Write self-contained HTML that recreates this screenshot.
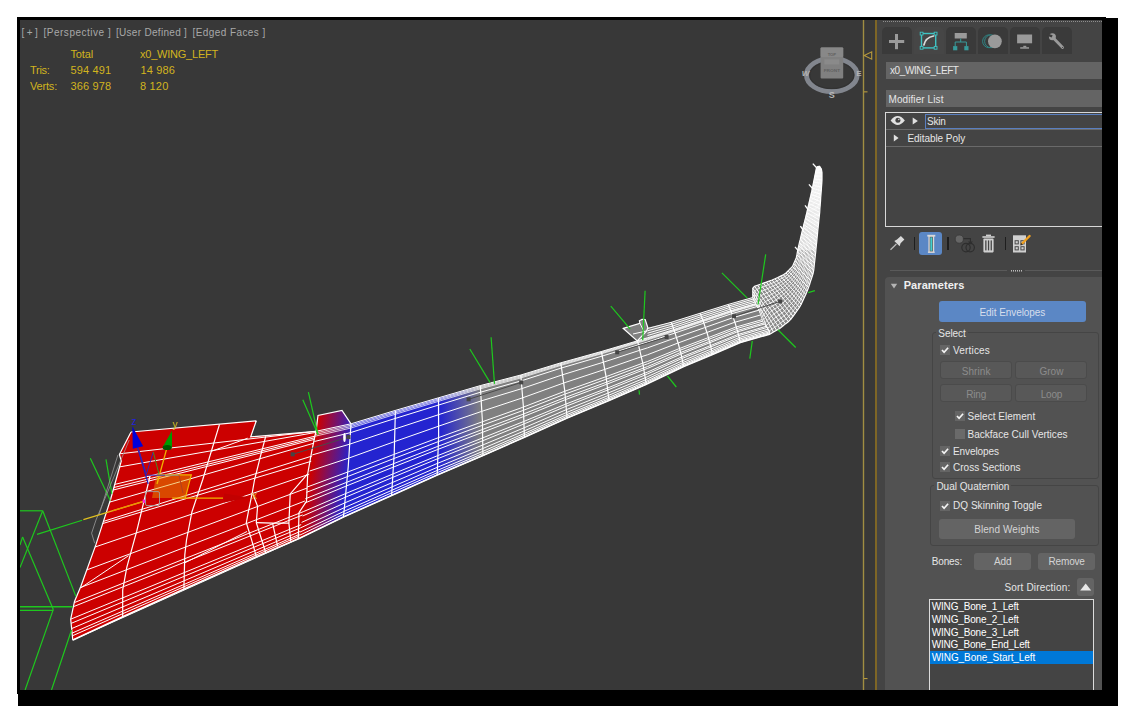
<!DOCTYPE html>
<html><head><meta charset="utf-8"><title>3ds Max - Skin modifier</title>
<style>
html,body{margin:0;padding:0;background:#fff;}
body{width:1122px;height:710px;position:relative;overflow:hidden;font-family:"Liberation Sans",sans-serif;font-size:10px;color:#e6e6e6;}
.abs{position:absolute}
#shadow{left:18px;top:18px;width:1100px;height:688px;background:#000}
#frame{left:17px;top:17px;width:1089px;height:677px;background:#000}
#vp{left:20px;top:20px;width:857px;height:670px;background:#383838;overflow:hidden}
#panel{left:877px;top:20px;width:225px;height:670px;background:#444444;overflow:hidden}
.t{position:absolute;white-space:nowrap;line-height:13px;height:13px}
.y{color:#d2b41e;font-size:11px}
.tab{position:absolute;top:7px;height:27px;background:#3a3a3a;border-radius:5px 5px 0 0}
.fld{position:absolute;left:9px;width:230px;height:17px;background:#646464}
.btn{position:absolute;background:#646464;border-radius:3px;text-align:center;color:#d4d4d4}
.dbtn{position:absolute;background:#585858;border:1px solid #4b4b4b;border-radius:3px;box-sizing:border-box;color:#8c8c8c;text-align:center}
.grp{position:absolute;border:1px solid #454545;border-radius:3px;box-sizing:border-box}
.cb{position:absolute;width:10px;height:10px;background:#656565}
.sep{position:absolute;width:1.6px;background:#1e1e1e;top:217.1px;height:12.6px}
</style></head><body>
<div id="shadow" class="abs"></div>
<div id="frame" class="abs"></div>

<!-- ================= VIEWPORT ================= -->
<div id="vp" class="abs"></div>
<svg class="abs" style="left:0;top:0" width="1122" height="710" viewBox="0 0 1122 710">
<clipPath id="vpc"><rect x="20" y="20" width="857" height="670"/></clipPath>
<g clip-path="url(#vpc)">
<defs>
<linearGradient id="rb" gradientUnits="userSpaceOnUse" x1="311" y1="470" x2="347.5" y2="475"><stop offset="0" stop-color="#cc0000"/><stop offset="1" stop-color="#2424d0"/></linearGradient>
<linearGradient id="bg" gradientUnits="userSpaceOnUse" x1="440" y1="430" x2="481" y2="430"><stop offset="0" stop-color="#2424d0"/><stop offset="1" stop-color="#808080"/></linearGradient>
</defs>
<polygon points="131.0,432.0 256.3,420.8 250.7,436.9 316.0,431.3 299.0,538.5 255.9,557.0 184.8,588.8 122.7,616.7 73.0,640.0 70.7,619.2 74.5,601.4 80.9,586.2 96.0,544.4 110.7,499.0 121.3,461.0 119.4,454.5" fill="#cc0000"/>
<polygon points="316.0,431.3 318.0,415.5 342.0,410.4 351.0,423.8 343.4,517.0 299.0,538.5" fill="url(#rb)"/>
<polygon points="351.0,423.8 395.4,410.4 438.5,397.8 437.2,475.0 391.6,495.4 343.4,517.0" fill="#2424d0"/>
<polygon points="438.5,397.8 480.3,385.6 482.9,455.6 437.2,475.0" fill="url(#bg)"/>
<polygon points="480.3,385.6 520.8,375.0 560.8,362.8 601.4,351.5 637.5,340.8 623.3,328.4 639.9,323.3 639.4,320.8 642.0,319.4 645.2,319.5 647.8,327.6 671.3,322.3 700.2,313.2 728.3,304.4 752.8,297.5 770.3,333.9 740.3,342.6 712.5,354.5 683.7,366.6 646.3,384.3 609.0,400.4 567.1,418.0 524.4,437.2 482.9,455.6" fill="#808080"/>
<line x1="119.7" y1="453.8" x2="316.0" y2="431.3" stroke="#ffffff" stroke-width="1" fill="none"/>
<line x1="119.6" y1="466.9" x2="315.8" y2="432.4" stroke="#ffffff" stroke-width="1" fill="none"/>
<line x1="114.8" y1="484.4" x2="315.2" y2="436.1" stroke="#ffffff" stroke-width="1" fill="none"/>
<line x1="113.9" y1="487.5" x2="315.0" y2="437.7" stroke="#ffffff" stroke-width="1" fill="none"/>
<line x1="113.2" y1="490.0" x2="314.7" y2="439.3" stroke="#ffffff" stroke-width="1" fill="none"/>
<line x1="109.7" y1="502.1" x2="314.1" y2="443.1" stroke="#ffffff" stroke-width="1" fill="none"/>
<line x1="103.4" y1="521.4" x2="312.1" y2="456.0" stroke="#ffffff" stroke-width="1" fill="none"/>
<line x1="102.8" y1="523.5" x2="311.2" y2="461.3" stroke="#ffffff" stroke-width="1" fill="none"/>
<line x1="95.1" y1="547.0" x2="309.2" y2="474.2" stroke="#ffffff" stroke-width="1" fill="none"/>
<line x1="86.8" y1="569.9" x2="307.0" y2="488.1" stroke="#ffffff" stroke-width="1" fill="none"/>
<line x1="80.3" y1="587.6" x2="304.9" y2="501.0" stroke="#ffffff" stroke-width="1" fill="none"/>
<line x1="74.3" y1="602.6" x2="303.2" y2="511.7" stroke="#ffffff" stroke-width="1" fill="none"/>
<line x1="73.4" y1="606.7" x2="302.7" y2="514.9" stroke="#ffffff" stroke-width="1" fill="none"/>
<line x1="70.7" y1="619.2" x2="301.2" y2="524.6" stroke="#ffffff" stroke-width="1" fill="none"/>
<line x1="71.1" y1="623.4" x2="300.7" y2="527.8" stroke="#ffffff" stroke-width="1" fill="none"/>
<line x1="71.6" y1="628.6" x2="300.1" y2="531.5" stroke="#ffffff" stroke-width="1" fill="none"/>
<line x1="72.1" y1="633.1" x2="299.7" y2="534.2" stroke="#ffffff" stroke-width="1" fill="none"/>
<line x1="72.4" y1="635.8" x2="299.4" y2="536.0" stroke="#ffffff" stroke-width="1" fill="none"/>
<line x1="72.8" y1="640.0" x2="299.0" y2="538.5" stroke="#ffffff" stroke-width="1" fill="none"/>
<line x1="131.0" y1="432.0" x2="256.3" y2="420.8" stroke="#ffffff" stroke-width="1.2" fill="none"/>
<line x1="211.4" y1="451.3" x2="247.7" y2="438.2" stroke="#ffffff" stroke-width="1" fill="none"/>
<polyline points="256.3,420.8 250.7,436.9 316.0,431.3" stroke="#ffffff" stroke-width="1.2" fill="none"/>
<polyline points="131.0,432.0 119.4,454.5 121.3,461.0 110.7,499.0 96.0,544.4 80.9,586.2 74.5,601.4 70.7,619.2 72.8,640.2" stroke="#ffffff" stroke-width="1.2" fill="none"/>
<polyline points="150.0,476.0 149.1,480.0 136.6,531.7 126.8,567.3 122.7,590.0 122.7,616.7" stroke="#ffffff" stroke-width="1.2" fill="none"/>
<polyline points="219.5,424.4 202.6,480.0 191.9,512.0 186.5,540.0 184.8,554.9 183.9,588.7" stroke="#ffffff" stroke-width="1.2" fill="none"/>
<polyline points="265.7,436.3 260.1,457.6 254.5,480.0 252.3,492.5 248.2,512.6 246.3,522.6 251.3,538.9 256.3,556.4" stroke="#ffffff" stroke-width="1.2" fill="none"/>
<polyline points="252.3,492.5 257.6,506.3 256.3,522.6 262.6,542.7 265.7,552.7" stroke="#ffffff" stroke-width="1.2" fill="none"/>
<polyline points="256.3,522.6 272.6,523.2 288.9,523.2" stroke="#ffffff" stroke-width="1.2" fill="none"/>
<polyline points="272.6,523.2 277.6,546.4" stroke="#ffffff" stroke-width="1.2" fill="none"/>
<polyline points="307.7,473.9 290.2,493.9 288.9,523.2 290.8,541.5" stroke="#ffffff" stroke-width="1.2" fill="none"/>
<polyline points="315.9,431.3 311.5,452.6 307.7,473.9 306.5,501.3 299.0,512.6 298.3,538.4" stroke="#ffffff" stroke-width="1.2" fill="none"/>
<line x1="81" y1="587.7" x2="128.5" y2="555.7" stroke="#ffffff" stroke-width="1" fill="none"/>
<line x1="184.5" y1="563" x2="247" y2="531.5" stroke="#ffffff" stroke-width="1" fill="none"/>
<polyline points="316.0,431.3 351.0,423.8 395.4,410.4 438.5,397.8 480.3,385.6 520.8,375.0 560.8,362.8 601.4,351.5 637.5,340.8" stroke="#fff" stroke-width="1" fill="none"/>
<polyline points="315.7,432.9 350.9,425.2 395.3,411.7 438.5,399.0 480.3,386.7 520.9,375.9 560.9,363.6 601.5,352.2 637.6,341.5" stroke="#fff" stroke-width="0.75" fill="none"/>
<polyline points="315.5,434.5 350.8,426.6 395.3,412.9 438.5,400.1 480.4,387.7 520.9,376.9 561.0,364.5 601.6,353.0 637.8,342.1" stroke="#fff" stroke-width="0.75" fill="none"/>
<polyline points="315.2,436.2 350.7,428.1 395.2,414.3 438.4,401.4 480.4,388.8 521.0,377.9 561.1,365.3 601.7,353.7 637.9,342.8" stroke="#fff" stroke-width="0.75" fill="none"/>
<polyline points="314.4,441.5 350.3,432.7 395.0,418.5 438.4,405.1 480.5,392.2 521.1,380.9 561.4,368.0 602.1,356.1 638.3,344.9" stroke="#fff" stroke-width="1" fill="none"/>
<polyline points="312.3,454.9 349.3,444.3 394.6,429.1 438.2,414.8 480.9,401.0 521.6,388.7 562.2,374.9 603.1,362.3 639.4,350.4" stroke="#fff" stroke-width="1" fill="none"/>
<polyline points="309.7,471.0 348.2,458.3 394.0,441.8 438.0,426.4 481.3,411.5 522.1,398.0 563.1,383.2 604.2,369.6 640.8,356.9" stroke="#fff" stroke-width="1" fill="none"/>
<polyline points="307.2,487.0 347.0,472.3 393.4,454.6 437.8,437.9 481.7,422.0 522.7,407.3 564.1,391.5 605.4,376.9 642.1,363.4" stroke="#fff" stroke-width="1" fill="none"/>
<polyline points="306.3,492.4 346.7,476.9 393.2,458.8 437.8,441.8 481.8,425.5 522.9,410.5 564.4,394.3 605.7,379.4 642.5,365.6" stroke="#fff" stroke-width="1" fill="none"/>
<polyline points="305.3,498.8 346.2,482.5 393.0,463.9 437.7,446.4 481.9,429.7 523.1,414.2 564.8,397.6 606.2,382.3 643.0,368.2" stroke="#fff" stroke-width="1" fill="none"/>
<polyline points="304.6,503.1 345.9,486.2 392.9,467.3 437.6,449.5 482.0,432.5 523.2,416.7 565.0,399.8 606.5,384.3 643.4,369.9" stroke="#fff" stroke-width="1" fill="none"/>
<polyline points="303.2,511.7 345.3,493.7 392.6,474.1 437.5,455.7 482.2,438.1 523.5,421.6 565.5,404.2 607.1,388.2 644.1,373.4" stroke="#fff" stroke-width="1" fill="none"/>
<polyline points="302.6,516.0 345.0,497.4 392.4,477.5 437.5,458.8 482.4,440.9 523.6,424.1 565.8,406.4 607.4,390.1 644.5,375.2" stroke="#fff" stroke-width="1" fill="none"/>
<polyline points="301.6,522.4 344.5,503.0 392.2,482.6 437.4,463.4 482.5,445.1 523.9,427.9 566.2,409.7 607.9,393.1 645.0,377.8" stroke="#fff" stroke-width="1" fill="none"/>
<polyline points="300.7,527.8 344.2,507.7 392.0,486.9 437.3,467.3 482.6,448.6 524.0,431.0 566.5,412.5 608.2,395.5 645.4,379.9" stroke="#fff" stroke-width="1" fill="none"/>
<polyline points="300.0,532.1 343.9,511.4 391.8,490.3 437.3,470.4 482.7,451.4 524.2,433.5 566.7,414.7 608.5,397.5 645.8,381.7" stroke="#fff" stroke-width="1" fill="none"/>
<polyline points="299.5,535.3 343.6,514.2 391.7,492.8 437.2,472.7 482.8,453.5 524.3,435.3 566.9,416.3 608.8,398.9 646.0,383.0" stroke="#fff" stroke-width="1" fill="none"/>
<polyline points="299.0,538.5 343.4,517.0 391.6,495.4 437.2,475.0 482.9,455.6 524.4,437.2 567.1,418.0 609.0,400.4 646.3,384.3" stroke="#fff" stroke-width="1" fill="none"/>
<polyline points="316.0,431.3 318.0,415.5 342.0,410.4 351.0,423.8" stroke="#ffffff" stroke-width="1.2" fill="none"/>
<path d="M351.0,423.8 Q348.7,470.4 343.4,517.0" stroke="#ffffff" stroke-width="1.2" fill="none"/>
<path d="M395.4,410.4 Q395.0,452.9 391.6,495.4" stroke="#ffffff" stroke-width="1.2" fill="none"/>
<path d="M438.5,397.8 Q439.4,436.4 437.2,475.0" stroke="#ffffff" stroke-width="1.2" fill="none"/>
<path d="M480.3,385.6 Q483.1,420.6 482.9,455.6" stroke="#ffffff" stroke-width="1.2" fill="none"/>
<path d="M520.8,375.0 Q524.1,406.1 524.4,437.2" stroke="#ffffff" stroke-width="1.2" fill="none"/>
<path d="M560.8,362.8 Q565.5,390.4 567.1,418.0" stroke="#ffffff" stroke-width="1.2" fill="none"/>
<path d="M601.4,351.5 Q606.7,375.9 609.0,400.4" stroke="#ffffff" stroke-width="1.2" fill="none"/>
<path d="M637.5,340.8 Q643.4,362.6 646.3,384.3" stroke="#ffffff" stroke-width="1.2" fill="none"/>
<polyline points="73.0,640.0 122.7,616.7 184.8,588.8 255.9,557.0 299.0,538.5 343.4,517.0 391.6,495.4 437.2,475.0 482.9,455.6 524.4,437.2 567.1,418.0 609.0,400.4 646.3,384.3 683.7,366.6 712.5,354.5 740.3,342.6 770.3,333.9" stroke="#ffffff" stroke-width="1.6" fill="none"/>
<polyline points="647.5,328.5 671.3,322.3 700.2,313.2 728.3,304.4 752.8,297.5" stroke="#fff" stroke-width="1" fill="none"/>
<polyline points="647.5,330.8 671.8,324.2 700.7,314.9 728.8,306.0 753.5,299.0" stroke="#fff" stroke-width="1" fill="none"/>
<polyline points="647.5,333.2 672.4,326.1 701.2,316.7 729.3,307.6 754.3,300.6" stroke="#fff" stroke-width="1" fill="none"/>
<polyline points="647.5,335.5 672.9,327.9 701.8,318.4 729.8,309.3 755.0,302.1" stroke="#fff" stroke-width="1" fill="none"/>
<polyline points="637.5,340.8 647.4,337.8 673.4,329.7 702.3,320.1 730.3,310.8 755.7,303.6" stroke="#fff" stroke-width="1" fill="none"/>
<polyline points="637.6,341.5 647.4,338.5 673.5,330.3 702.4,320.7 730.5,311.3 756.0,304.1" stroke="#fff" stroke-width="0.75" fill="none"/>
<polyline points="637.8,342.1 647.4,339.2 673.7,330.8 702.6,321.2 730.6,311.8 756.2,304.5" stroke="#fff" stroke-width="0.75" fill="none"/>
<polyline points="637.9,342.8 647.4,339.9 673.9,331.4 702.7,321.7 730.8,312.3 756.4,305.0" stroke="#fff" stroke-width="0.75" fill="none"/>
<polyline points="638.3,344.9 647.4,342.2 674.4,333.2 703.2,323.4 731.3,313.8 757.1,306.5" stroke="#fff" stroke-width="1" fill="none"/>
<polyline points="639.4,350.4 647.4,347.9 675.6,337.8 704.5,327.7 732.5,317.8 758.9,310.2" stroke="#fff" stroke-width="1" fill="none"/>
<polyline points="640.8,356.9 647.4,354.8 677.2,343.3 706.0,332.8 734.0,322.5 761.1,314.8" stroke="#fff" stroke-width="1" fill="none"/>
<polyline points="642.1,363.4 647.3,361.6 678.7,348.8 707.6,337.9 735.5,327.2 763.3,319.3" stroke="#fff" stroke-width="1" fill="none"/>
<polyline points="642.5,365.6 647.3,363.9 679.2,350.6 708.1,339.6 736.0,328.8 764.0,320.8" stroke="#fff" stroke-width="1" fill="none"/>
<polyline points="643.0,368.2 647.3,366.7 679.8,352.8 708.7,341.7 736.6,330.7 764.9,322.6" stroke="#fff" stroke-width="1" fill="none"/>
<polyline points="643.4,369.9 647.3,368.5 680.3,354.3 709.1,343.0 737.0,332.0 765.4,323.8" stroke="#fff" stroke-width="1" fill="none"/>
<polyline points="644.1,373.4 647.3,372.2 681.1,357.2 709.9,345.8 737.8,334.5 766.6,326.2" stroke="#fff" stroke-width="1" fill="none"/>
<polyline points="644.5,375.2 647.3,374.0 681.5,358.7 710.3,347.1 738.2,335.8 767.2,327.4" stroke="#fff" stroke-width="1" fill="none"/>
<polyline points="645.0,377.8 647.2,376.8 682.1,360.9 710.9,349.2 738.8,337.7 768.0,329.2" stroke="#fff" stroke-width="1" fill="none"/>
<polyline points="645.4,379.9 647.2,379.0 682.6,362.7 711.4,350.9 739.2,339.2 768.8,330.7" stroke="#fff" stroke-width="1" fill="none"/>
<polyline points="645.8,381.7 647.2,380.9 683.0,364.2 711.8,352.2 739.6,340.5 769.3,331.9" stroke="#fff" stroke-width="1" fill="none"/>
<polyline points="646.0,383.0 647.2,382.2 683.3,365.3 712.1,353.3 739.9,341.5 769.8,332.8" stroke="#fff" stroke-width="1" fill="none"/>
<polyline points="646.3,384.3 647.2,383.6 683.6,366.4 712.4,354.3 740.2,342.4 770.2,333.7" stroke="#fff" stroke-width="1" fill="none"/>
<path d="M671.3,322.3 Q679.5,344.5 683.7,366.6" stroke="#ffffff" stroke-width="1.2" fill="none"/>
<path d="M700.2,313.2 Q708.4,333.9 712.5,354.5" stroke="#ffffff" stroke-width="1.2" fill="none"/>
<path d="M728.3,304.4 Q736.3,323.5 740.3,342.6" stroke="#ffffff" stroke-width="1.2" fill="none"/>
<path d="M752.8,297.5 Q763.5,315.7 770.3,333.9" stroke="#ffffff" stroke-width="1.2" fill="none"/>
<polygon points="623.3,328.4 639.9,323.3 639.4,320.8 642.0,319.4 645.2,319.5 647.8,327.6 646.7,330.9 637.3,340.9" stroke="#ffffff" stroke-width="1.2" fill="none"/>
<line x1="639.9" y1="323.3" x2="644" y2="331.5" stroke="#ffffff" stroke-width="1" fill="none"/>
<line x1="633" y1="334" x2="646.7" y2="330.9" stroke="#ffffff" stroke-width="1" fill="none"/>
<polygon points="752.8,297.5 752.8,287.0 761.4,283.8 773.9,279.4 785.2,273.8 792.7,266.3 796.4,257.5 797.7,250.0 802.0,232.0 807.4,210.4 812.0,190.3 816.6,167.0 819.5,166.0 822.0,170.0 822.0,181.0 819.7,212.0 816.6,243.0 815.9,250.0 813.4,272.6 807.7,290.0 800.2,306.4 790.2,320.2 778.9,329.0 770.3,333.9" fill="#8a8a8a"/>
<line x1="752.8" y1="297.5" x2="770.3" y2="333.9" stroke="#ffffff" stroke-width="1" fill="none"/>
<line x1="752.8" y1="294.4" x2="773.5" y2="332.1" stroke="#ffffff" stroke-width="1" fill="none"/>
<line x1="752.8" y1="291.3" x2="776.6" y2="330.3" stroke="#ffffff" stroke-width="1" fill="none"/>
<line x1="752.8" y1="288.2" x2="779.7" y2="328.4" stroke="#ffffff" stroke-width="1" fill="none"/>
<line x1="754.6" y1="286.3" x2="782.6" y2="326.2" stroke="#ffffff" stroke-width="1" fill="none"/>
<line x1="757.5" y1="285.2" x2="785.4" y2="323.9" stroke="#ffffff" stroke-width="1" fill="none"/>
<line x1="760.4" y1="284.2" x2="788.3" y2="321.7" stroke="#ffffff" stroke-width="1" fill="none"/>
<line x1="763.4" y1="283.1" x2="790.9" y2="319.2" stroke="#ffffff" stroke-width="1" fill="none"/>
<line x1="766.3" y1="282.1" x2="793.0" y2="316.3" stroke="#ffffff" stroke-width="1" fill="none"/>
<line x1="769.2" y1="281.0" x2="795.2" y2="313.3" stroke="#ffffff" stroke-width="1" fill="none"/>
<line x1="772.1" y1="280.0" x2="797.3" y2="310.4" stroke="#ffffff" stroke-width="1" fill="none"/>
<line x1="775.0" y1="278.8" x2="799.4" y2="307.4" stroke="#ffffff" stroke-width="1" fill="none"/>
<line x1="777.8" y1="277.5" x2="801.2" y2="304.3" stroke="#ffffff" stroke-width="1" fill="none"/>
<line x1="780.6" y1="276.1" x2="802.7" y2="301.0" stroke="#ffffff" stroke-width="1" fill="none"/>
<line x1="783.4" y1="274.7" x2="804.2" y2="297.7" stroke="#ffffff" stroke-width="1" fill="none"/>
<line x1="786.0" y1="273.0" x2="805.7" y2="294.4" stroke="#ffffff" stroke-width="1" fill="none"/>
<line x1="788.1" y1="270.9" x2="807.2" y2="291.0" stroke="#ffffff" stroke-width="1" fill="none"/>
<line x1="790.3" y1="268.7" x2="808.5" y2="287.6" stroke="#ffffff" stroke-width="1" fill="none"/>
<line x1="792.5" y1="266.5" x2="809.6" y2="284.2" stroke="#ffffff" stroke-width="1" fill="none"/>
<line x1="793.8" y1="263.6" x2="810.7" y2="280.7" stroke="#ffffff" stroke-width="1" fill="none"/>
<line x1="795.0" y1="260.8" x2="811.9" y2="277.3" stroke="#ffffff" stroke-width="1" fill="none"/>
<line x1="796.2" y1="257.9" x2="813.0" y2="273.8" stroke="#ffffff" stroke-width="1" fill="none"/>
<line x1="796.9" y1="254.9" x2="813.7" y2="270.3" stroke="#ffffff" stroke-width="1" fill="none"/>
<line x1="797.4" y1="251.8" x2="814.1" y2="266.7" stroke="#ffffff" stroke-width="1" fill="none"/>
<line x1="798.0" y1="248.8" x2="814.5" y2="263.0" stroke="#ffffff" stroke-width="1" fill="none"/>
<line x1="798.7" y1="245.8" x2="814.9" y2="259.4" stroke="#ffffff" stroke-width="1" fill="none"/>
<line x1="799.4" y1="242.7" x2="815.3" y2="255.8" stroke="#ffffff" stroke-width="1" fill="none"/>
<line x1="800.2" y1="239.7" x2="815.7" y2="252.2" stroke="#ffffff" stroke-width="1" fill="none"/>
<line x1="800.9" y1="236.7" x2="816.0" y2="248.6" stroke="#ffffff" stroke-width="1" fill="none"/>
<line x1="801.6" y1="233.7" x2="816.4" y2="245.0" stroke="#ffffff" stroke-width="1" fill="none"/>
<line x1="802.3" y1="230.6" x2="816.8" y2="241.4" stroke="#ffffff" stroke-width="1" fill="none"/>
<line x1="803.1" y1="227.6" x2="817.1" y2="237.8" stroke="#ffffff" stroke-width="1" fill="none"/>
<line x1="803.8" y1="224.6" x2="817.5" y2="234.1" stroke="#ffffff" stroke-width="1" fill="none"/>
<line x1="804.6" y1="221.6" x2="817.8" y2="230.5" stroke="#ffffff" stroke-width="1" fill="none"/>
<line x1="805.4" y1="218.6" x2="818.2" y2="226.9" stroke="#ffffff" stroke-width="1" fill="none"/>
<line x1="806.1" y1="215.6" x2="818.6" y2="223.3" stroke="#ffffff" stroke-width="1" fill="none"/>
<line x1="806.9" y1="212.6" x2="818.9" y2="219.7" stroke="#ffffff" stroke-width="1" fill="none"/>
<line x1="807.6" y1="209.5" x2="819.3" y2="216.1" stroke="#ffffff" stroke-width="1" fill="none"/>
<line x1="808.3" y1="206.5" x2="819.7" y2="212.4" stroke="#ffffff" stroke-width="1" fill="none"/>
<line x1="809.0" y1="203.5" x2="819.9" y2="208.8" stroke="#ffffff" stroke-width="1" fill="none"/>
<line x1="809.7" y1="200.5" x2="820.2" y2="205.2" stroke="#ffffff" stroke-width="1" fill="none"/>
<line x1="810.4" y1="197.4" x2="820.5" y2="201.6" stroke="#ffffff" stroke-width="1" fill="none"/>
<line x1="811.1" y1="194.4" x2="820.7" y2="197.9" stroke="#ffffff" stroke-width="1" fill="none"/>
<line x1="811.8" y1="191.4" x2="821.0" y2="194.3" stroke="#ffffff" stroke-width="1" fill="none"/>
<line x1="812.4" y1="188.3" x2="821.3" y2="190.7" stroke="#ffffff" stroke-width="1" fill="none"/>
<line x1="813.0" y1="185.3" x2="821.5" y2="187.1" stroke="#ffffff" stroke-width="1" fill="none"/>
<line x1="813.6" y1="182.2" x2="821.8" y2="183.4" stroke="#ffffff" stroke-width="1" fill="none"/>
<line x1="814.2" y1="179.2" x2="822.0" y2="179.8" stroke="#ffffff" stroke-width="1" fill="none"/>
<line x1="814.8" y1="176.1" x2="822.0" y2="176.2" stroke="#ffffff" stroke-width="1" fill="none"/>
<line x1="815.4" y1="173.1" x2="822.0" y2="172.6" stroke="#ffffff" stroke-width="1" fill="none"/>
<line x1="816.0" y1="170.0" x2="821.4" y2="169.1" stroke="#ffffff" stroke-width="1" fill="none"/>
<line x1="816.6" y1="167.0" x2="819.5" y2="166.0" stroke="#ffffff" stroke-width="1" fill="none"/>
<polyline points="752.8,297.5 752.8,294.4 752.8,291.3 752.8,288.2 754.6,286.3 757.5,285.2 760.4,284.2 763.4,283.1 766.3,282.1 769.2,281.0 772.1,280.0 775.0,278.8 777.8,277.5 780.6,276.1 783.4,274.7 786.0,273.0 788.1,270.9 790.3,268.7 792.5,266.5 793.8,263.6 795.0,260.8 796.2,257.9 796.9,254.9 797.4,251.8 798.0,248.8 798.7,245.8 799.4,242.7 800.2,239.7 800.9,236.7 801.6,233.7 802.3,230.6 803.1,227.6 803.8,224.6 804.6,221.6 805.4,218.6 806.1,215.6 806.9,212.6 807.6,209.5 808.3,206.5 809.0,203.5 809.7,200.5 810.4,197.4 811.1,194.4 811.8,191.4 812.4,188.3 813.0,185.3 813.6,182.2 814.2,179.2 814.8,176.1 815.4,173.1 816.0,170.0 816.6,167.0" stroke="#fff" stroke-width="1.2" fill="none"/>
<polyline points="754.1,300.3 754.4,297.3 754.6,294.3 754.9,291.3 756.8,289.4 759.7,288.2 762.6,287.0 765.5,285.9 768.3,284.7 771.2,283.5 774.1,282.4 776.9,281.0 779.6,279.5 782.3,278.0 785.0,276.5 787.5,274.7 789.6,272.4 791.7,270.1 793.9,267.8 795.1,265.0 796.3,262.0 797.5,259.1 798.1,256.1 798.7,253.0 799.3,249.9 800.0,246.8 800.7,243.7 801.4,240.7 802.0,237.6 802.7,234.5 803.4,231.5 804.2,228.4 804.9,225.4 805.6,222.3 806.3,219.2 807.1,216.2 807.8,213.1 808.5,210.0 809.2,207.0 809.8,203.9 810.5,200.8 811.1,197.8 811.8,194.7 812.5,191.6 813.1,188.5 813.6,185.4 814.2,182.3 814.8,179.2 815.3,176.1 815.9,173.1 816.4,170.0 816.8,166.9" stroke="#fff" stroke-width="0.8" fill="none"/>
<polyline points="755.5,303.1 756.0,300.2 756.5,297.3 756.9,294.4 758.9,292.5 761.8,291.2 764.7,289.9 767.6,288.7 770.4,287.3 773.2,286.0 776.0,284.7 778.8,283.2 781.4,281.6 784.0,279.9 786.6,278.2 789.0,276.3 791.1,274.0 793.1,271.6 795.2,269.2 796.4,266.3 797.6,263.3 798.8,260.4 799.4,257.3 799.9,254.1 800.5,251.0 801.2,247.9 801.9,244.7 802.5,241.6 803.2,238.5 803.9,235.4 804.6,232.3 805.3,229.2 805.9,226.1 806.6,223.0 807.3,219.9 808.0,216.8 808.7,213.7 809.4,210.5 810.0,207.4 810.7,204.3 811.3,201.2 811.9,198.1 812.6,194.9 813.2,191.8 813.8,188.7 814.3,185.6 814.9,182.4 815.4,179.3 815.9,176.2 816.4,173.0 816.8,169.9 817.0,166.8" stroke="#fff" stroke-width="0.8" fill="none"/>
<polyline points="756.8,305.9 757.6,303.1 758.3,300.3 759.0,297.5 761.1,295.5 764.0,294.2 766.9,292.8 769.7,291.4 772.5,290.0 775.2,288.5 778.0,287.0 780.7,285.4 783.2,283.7 785.7,281.8 788.2,280.0 790.5,278.0 792.5,275.5 794.5,273.0 796.5,270.5 797.7,267.6 798.9,264.6 800.1,261.6 800.7,258.4 801.2,255.2 801.8,252.1 802.4,248.9 803.1,245.8 803.7,242.6 804.4,239.4 805.0,236.3 805.7,233.1 806.3,230.0 807.0,226.8 807.7,223.7 808.3,220.5 809.0,217.4 809.6,214.2 810.3,211.0 810.9,207.9 811.5,204.7 812.1,201.6 812.7,198.4 813.3,195.2 813.9,192.1 814.4,188.9 815.0,185.7 815.5,182.5 816.0,179.3 816.5,176.2 816.9,173.0 817.3,169.8 817.3,166.8" stroke="#fff" stroke-width="0.8" fill="none"/>
<polyline points="758.2,308.7 759.2,306.0 760.1,303.3 761.1,300.5 763.2,298.6 766.1,297.1 769.0,295.7 771.8,294.2 774.5,292.6 777.2,291.0 779.9,289.4 782.5,287.6 785.0,285.7 787.4,283.7 789.8,281.8 792.0,279.6 794.0,277.1 795.9,274.5 797.8,271.9 799.0,268.9 800.2,265.9 801.4,262.8 802.0,259.6 802.5,256.4 803.1,253.2 803.7,250.0 804.3,246.8 804.9,243.6 805.5,240.4 806.2,237.1 806.8,233.9 807.4,230.7 808.0,227.5 808.7,224.3 809.3,221.1 809.9,218.0 810.6,214.8 811.2,211.5 811.8,208.3 812.4,205.1 812.9,201.9 813.5,198.7 814.0,195.5 814.6,192.3 815.1,189.1 815.6,185.8 816.1,182.6 816.6,179.4 817.0,176.2 817.4,172.9 817.7,169.8 817.5,166.7" stroke="#fff" stroke-width="0.8" fill="none"/>
<polyline points="759.5,311.5 760.7,308.9 762.0,306.3 763.1,303.6 765.4,301.6 768.3,300.1 771.1,298.6 774.0,297.0 776.6,295.2 779.2,293.5 781.8,291.7 784.4,289.8 786.8,287.8 789.1,285.7 791.4,283.5 793.6,281.2 795.5,278.6 797.3,276.0 799.1,273.3 800.3,270.2 801.5,267.1 802.7,264.0 803.3,260.8 803.8,257.5 804.3,254.3 804.9,251.0 805.5,247.8 806.1,244.5 806.7,241.3 807.3,238.0 807.9,234.8 808.5,231.5 809.1,228.3 809.7,225.0 810.3,221.8 810.9,218.5 811.5,215.3 812.1,212.0 812.7,208.8 813.2,205.5 813.7,202.3 814.3,199.0 814.8,195.8 815.3,192.5 815.8,189.2 816.3,186.0 816.8,182.7 817.2,179.4 817.6,176.2 817.9,172.9 818.1,169.7 817.7,166.6" stroke="#fff" stroke-width="0.8" fill="none"/>
<polyline points="760.9,314.3 762.3,311.8 763.8,309.3 765.2,306.7 767.5,304.7 770.4,303.1 773.3,301.5 776.1,299.8 778.6,297.9 781.2,295.9 783.8,294.0 786.3,292.0 788.6,289.8 790.8,287.6 793.0,285.3 795.1,282.9 797.0,280.2 798.7,277.4 800.4,274.6 801.6,271.5 802.8,268.4 804.0,265.3 804.6,262.0 805.1,258.7 805.6,255.4 806.2,252.1 806.7,248.8 807.3,245.5 807.9,242.2 808.4,238.9 809.0,235.6 809.6,232.3 810.1,229.0 810.7,225.7 811.3,222.4 811.9,219.1 812.4,215.8 813.0,212.6 813.5,209.3 814.0,205.9 814.5,202.6 815.0,199.3 815.5,196.0 816.0,192.7 816.5,189.4 816.9,186.1 817.4,182.8 817.8,179.5 818.1,176.2 818.4,172.8 818.5,169.6 817.9,166.5" stroke="#fff" stroke-width="0.8" fill="none"/>
<polyline points="762.2,317.1 763.9,314.7 765.6,312.3 767.3,309.8 769.7,307.8 772.5,306.1 775.4,304.4 778.2,302.6 780.7,300.5 783.2,298.4 785.7,296.4 788.2,294.2 790.4,291.9 792.5,289.5 794.6,287.1 796.6,284.5 798.4,281.7 800.1,278.9 801.7,276.0 802.9,272.8 804.1,269.7 805.3,266.5 805.9,263.2 806.4,259.8 806.9,256.5 807.4,253.1 808.0,249.8 808.5,246.4 809.0,243.1 809.6,239.8 810.1,236.4 810.6,233.1 811.2,229.7 811.7,226.4 812.3,223.1 812.8,219.7 813.4,216.4 813.9,213.1 814.4,209.7 814.9,206.4 815.3,203.0 815.8,199.7 816.3,196.3 816.7,193.0 817.2,189.6 817.6,186.2 818.0,182.9 818.4,179.5 818.7,176.2 819.0,172.8 818.9,169.5 818.2,166.5" stroke="#fff" stroke-width="0.8" fill="none"/>
<polyline points="763.6,319.9 765.5,317.6 767.5,315.3 769.3,312.9 771.8,310.8 774.7,309.0 777.6,307.3 780.3,305.3 782.8,303.1 785.2,300.9 787.6,298.7 790.0,296.4 792.2,294.0 794.2,291.4 796.2,288.8 798.1,286.2 799.9,283.3 801.5,280.3 803.0,277.4 804.2,274.2 805.4,270.9 806.5,267.7 807.2,264.4 807.6,261.0 808.1,257.6 808.6,254.2 809.2,250.8 809.7,247.4 810.2,244.0 810.7,240.6 811.2,237.2 811.7,233.9 812.2,230.5 812.8,227.1 813.3,223.7 813.8,220.3 814.3,216.9 814.8,213.6 815.3,210.2 815.7,206.8 816.2,203.4 816.6,200.0 817.0,196.6 817.5,193.2 817.9,189.8 818.3,186.4 818.7,183.0 819.0,179.6 819.2,176.2 819.5,172.8 819.3,169.5 818.4,166.4" stroke="#fff" stroke-width="0.8" fill="none"/>
<polyline points="764.9,322.7 767.1,320.5 769.3,318.3 771.4,316.0 774.0,313.9 776.8,312.0 779.7,310.1 782.4,308.1 784.8,305.8 787.2,303.4 789.6,301.0 791.9,298.6 794.0,296.0 795.9,293.3 797.8,290.6 799.6,287.8 801.4,284.8 802.9,281.8 804.4,278.7 805.5,275.5 806.7,272.2 807.8,268.9 808.5,265.5 808.9,262.1 809.4,258.7 809.9,255.2 810.4,251.8 810.9,248.4 811.4,244.9 811.8,241.5 812.3,238.1 812.8,234.6 813.3,231.2 813.8,227.8 814.3,224.3 814.7,220.9 815.2,217.5 815.7,214.1 816.2,210.6 816.6,207.2 817.0,203.7 817.4,200.3 817.8,196.9 818.2,193.4 818.5,190.0 818.9,186.5 819.3,183.1 819.6,179.6 819.8,176.2 820.0,172.7 819.8,169.4 818.6,166.3" stroke="#fff" stroke-width="0.8" fill="none"/>
<polyline points="766.3,325.5 768.7,323.4 771.1,321.3 773.5,319.1 776.1,317.0 779.0,315.0 781.9,313.0 784.6,310.9 786.9,308.4 789.2,305.9 791.5,303.4 793.8,300.8 795.8,298.1 797.6,295.2 799.4,292.4 801.1,289.4 802.8,286.4 804.3,283.3 805.7,280.1 806.8,276.8 808.0,273.5 809.1,270.2 809.8,266.7 810.2,263.2 810.7,259.8 811.1,256.3 811.6,252.8 812.1,249.3 812.5,245.8 813.0,242.4 813.4,238.9 813.9,235.4 814.3,231.9 814.8,228.5 815.2,225.0 815.7,221.5 816.1,218.0 816.6,214.6 817.0,211.1 817.4,207.6 817.8,204.1 818.1,200.6 818.5,197.1 818.9,193.6 819.2,190.2 819.6,186.7 819.9,183.2 820.2,179.7 820.3,176.2 820.5,172.7 820.2,169.3 818.8,166.2" stroke="#fff" stroke-width="0.8" fill="none"/>
<polyline points="767.6,328.3 770.3,326.3 773.0,324.3 775.6,322.2 778.3,320.0 781.1,318.0 784.0,315.9 786.7,313.7 788.9,311.0 791.2,308.4 793.4,305.7 795.7,303.0 797.6,300.1 799.3,297.1 801.0,294.1 802.7,291.1 804.3,287.9 805.7,284.7 807.0,281.5 808.1,278.1 809.3,274.7 810.4,271.4 811.1,267.9 811.5,264.4 811.9,260.9 812.4,257.3 812.8,253.8 813.3,250.3 813.7,246.8 814.1,243.2 814.5,239.7 815.0,236.2 815.4,232.7 815.8,229.1 816.2,225.6 816.7,222.1 817.1,218.6 817.5,215.1 817.9,211.5 818.3,208.0 818.6,204.5 818.9,200.9 819.3,197.4 819.6,193.9 819.9,190.3 820.2,186.8 820.6,183.3 820.8,179.7 820.9,176.2 821.0,172.6 820.6,169.2 819.1,166.2" stroke="#fff" stroke-width="0.8" fill="none"/>
<polyline points="769.0,331.1 771.9,329.2 774.8,327.3 777.6,325.3 780.4,323.1 783.3,320.9 786.2,318.8 788.8,316.4 791.0,313.6 793.2,310.8 795.4,308.0 797.6,305.2 799.4,302.2 801.0,299.0 802.6,295.9 804.2,292.7 805.8,289.5 807.1,286.2 808.3,282.8 809.4,279.4 810.6,276.0 811.7,272.6 812.4,269.1 812.8,265.5 813.2,261.9 813.6,258.4 814.0,254.8 814.5,251.2 814.9,247.7 815.3,244.1 815.7,240.5 816.0,237.0 816.4,233.4 816.8,229.8 817.2,226.3 817.6,222.7 818.0,219.1 818.4,215.6 818.8,212.0 819.1,208.4 819.4,204.8 819.7,201.2 820.0,197.7 820.3,194.1 820.6,190.5 820.9,186.9 821.2,183.4 821.4,179.8 821.4,176.2 821.5,172.6 821.0,169.2 819.3,166.1" stroke="#fff" stroke-width="0.8" fill="none"/>
<polyline points="770.3,333.9 773.5,332.1 776.6,330.3 779.7,328.4 782.6,326.2 785.4,323.9 788.3,321.7 790.9,319.2 793.0,316.3 795.2,313.3 797.3,310.4 799.4,307.4 801.2,304.3 802.7,301.0 804.2,297.7 805.7,294.4 807.2,291.0 808.5,287.6 809.6,284.2 810.7,280.7 811.9,277.3 813.0,273.8 813.7,270.3 814.1,266.7 814.5,263.0 814.9,259.4 815.3,255.8 815.7,252.2 816.0,248.6 816.4,245.0 816.8,241.4 817.1,237.8 817.5,234.1 817.8,230.5 818.2,226.9 818.6,223.3 818.9,219.7 819.3,216.1 819.7,212.4 819.9,208.8 820.2,205.2 820.5,201.6 820.7,197.9 821.0,194.3 821.3,190.7 821.5,187.1 821.8,183.4 822.0,179.8 822.0,176.2 822.0,172.6 821.4,169.1 819.5,166.0" stroke="#fff" stroke-width="1.2" fill="none"/>
<polygon points="797.7,250.0 816.6,167.0 819.5,166.0 822.0,170.0 822.0,181.0 815.9,250.0" fill="#ffffff" fill-opacity="0.45"/>
<line x1="816.6" y1="167.8" x2="812.8" y2="163.6" stroke="#fff" stroke-width="1.3"/>
<line x1="812.8" y1="188.7" x2="808.9" y2="184.4" stroke="#fff" stroke-width="1.3"/>
<line x1="808.1" y1="209.6" x2="805" y2="205.4" stroke="#fff" stroke-width="1.3"/>
<line x1="803.5" y1="230.5" x2="800.4" y2="226.2" stroke="#fff" stroke-width="1.3"/>
<line x1="798.8" y1="251.4" x2="795" y2="246.8" stroke="#fff" stroke-width="1.3"/>
<polygon points="757.5,305.0 761.0,312.0 766.0,326.0 770.0,332.0 763.0,322.0" fill="#808080" stroke="#fff" stroke-width="0.8"/>
<line x1="292.7" y1="454.3" x2="348.5" y2="437" stroke="#4a4a4a" stroke-width="1"/>
<rect x="290.7" y="452.3" width="4" height="4" fill="#454545"/>
<rect x="346.5" y="435.0" width="4" height="4" fill="#454545"/>
<line x1="468.6" y1="399.3" x2="521.2" y2="382.4" stroke="#4a4a4a" stroke-width="1"/>
<rect x="466.6" y="397.3" width="4" height="4" fill="#454545"/>
<rect x="519.2" y="380.4" width="4" height="4" fill="#454545"/>
<line x1="617.2" y1="352.3" x2="666.6" y2="337" stroke="#4a4a4a" stroke-width="1"/>
<rect x="615.2" y="350.3" width="4" height="4" fill="#454545"/>
<rect x="664.6" y="335.0" width="4" height="4" fill="#454545"/>
<line x1="734" y1="316.2" x2="780.2" y2="301.4" stroke="#4a4a4a" stroke-width="1"/>
<rect x="732.0" y="314.2" width="4" height="4" fill="#454545"/>
<rect x="778.2" y="299.4" width="4" height="4" fill="#454545"/>
<ellipse cx="344.5" cy="437.5" rx="1.3" ry="4.5" fill="#fff"/>
<line x1="302.8" y1="399.8" x2="318" y2="434.5" stroke="#1ec81e" stroke-width="1.2" fill="none"/>
<line x1="308.4" y1="392.2" x2="318" y2="434.5" stroke="#1ec81e" stroke-width="1.2" fill="none"/>
<line x1="469.8" y1="349" x2="490.1" y2="382.6" stroke="#1ec81e" stroke-width="1.2" fill="none"/>
<line x1="491.1" y1="337.3" x2="494.5" y2="383.9" stroke="#1ec81e" stroke-width="1.2" fill="none"/>
<line x1="610.8" y1="306.1" x2="630.2" y2="329.1" stroke="#1ec81e" stroke-width="1.2" fill="none"/>
<line x1="645.1" y1="290.7" x2="642.7" y2="340.2" stroke="#1ec81e" stroke-width="1.2" fill="none"/>
<line x1="667.4" y1="375.9" x2="676.3" y2="387" stroke="#1ec81e" stroke-width="1.2" fill="none"/>
<line x1="639" y1="390.3" x2="639.5" y2="394.6" stroke="#1ec81e" stroke-width="1.2" fill="none"/>
<line x1="752.3" y1="340.9" x2="749.8" y2="358.6" stroke="#1ec81e" stroke-width="1.2" fill="none"/>
<line x1="721.9" y1="272.8" x2="747.3" y2="298.2" stroke="#1ec81e" stroke-width="1.2" fill="none"/>
<line x1="765.7" y1="254.4" x2="758" y2="304.5" stroke="#1ec81e" stroke-width="1.2" fill="none"/>
<line x1="808.3" y1="292.6" x2="814.9" y2="290.7" stroke="#1ec81e" stroke-width="1.2" fill="none"/>
<line x1="777.9" y1="329.8" x2="795.7" y2="347.5" stroke="#1ec81e" stroke-width="1.2" fill="none"/>
<line x1="90.3" y1="458.2" x2="110.4" y2="500.8" stroke="#1ec81e" stroke-width="1.2" fill="none"/>
<line x1="106" y1="459.4" x2="111.9" y2="493.9" stroke="#1ec81e" stroke-width="1.2" fill="none"/>
<line x1="20" y1="510.8" x2="42.7" y2="510.8" stroke="#1ec81e" stroke-width="1.2" fill="none"/>
<line x1="42.7" y1="510.8" x2="20" y2="567.6" stroke="#1ec81e" stroke-width="1.2" fill="none"/>
<line x1="42.7" y1="510.8" x2="75.9" y2="596.4" stroke="#1ec81e" stroke-width="1.2" fill="none"/>
<line x1="82.2" y1="520.2" x2="37" y2="534.4" stroke="#1ec81e" stroke-width="1.2" fill="none"/>
<line x1="20" y1="545" x2="22.6" y2="536.9" stroke="#1ec81e" stroke-width="1.2" fill="none"/>
<line x1="22.6" y1="536.9" x2="53.3" y2="609.4" stroke="#1ec81e" stroke-width="1.2" fill="none"/>
<line x1="53.3" y1="609.4" x2="25.1" y2="690" stroke="#1ec81e" stroke-width="1.2" fill="none"/>
<line x1="71.5" y1="630" x2="51.5" y2="690" stroke="#1ec81e" stroke-width="1.2" fill="none"/>
<line x1="20" y1="606.7" x2="72.8" y2="606.7" stroke="#1ec81e" stroke-width="1.6"/>
<line x1="20" y1="610.3" x2="53.3" y2="610.3" stroke="#1ec81e" stroke-width="1.2"/>
<polyline points="129.2,440.0 96.0,520.0 91.6,533.2 94.7,543.2" stroke="#999" stroke-width="0.8" fill="none"/>
<polyline points="117.9,455.0 99.0,515.0" stroke="#999" stroke-width="0.8" fill="none"/>
<polygon points="156.4,474.8 191.3,474.8 185.5,498.0 152.0,498.0" fill="#e8a000" fill-opacity="0.45"/>
<polyline points="157.0,474.8 191.3,474.8 185.3,498.2" stroke="#f0b400" stroke-width="1.2" fill="none"/>
<line x1="172.2" y1="498.2" x2="223" y2="498.2" stroke="#f0b400" stroke-width="1.2"/>
<polygon points="224,493.6 250.5,497.6 224,502.4" fill="#c20000"/>
<line x1="83.4" y1="519.6" x2="143.6" y2="501.4" stroke="#e0c020" stroke-width="1.3"/>
<line x1="113" y1="510.6" x2="143.6" y2="501.4" stroke="#f09000" stroke-width="1.3"/>
<rect x="142.6" y="499.6" width="3.2" height="3.2" fill="#ff20e0"/>
<rect x="145.5" y="491.6" width="14" height="14" rx="1.5" fill="none" stroke="#a0a0a0" stroke-width="0.9"/>
<line x1="137.6" y1="447.6" x2="148.2" y2="483.9" stroke="#2020c0" stroke-width="1.3"/>
<polygon points="132.3,426.3 132.8,448.8 143.2,446.3" fill="#0000d8"/>
<line x1="167" y1="447.6" x2="157" y2="484" stroke="#f0b400" stroke-width="1.3"/>
<polygon points="172,430.7 162.7,447 172,447.6" fill="#009a00"/>
<ellipse cx="167.2" cy="447.5" rx="4.6" ry="2.6" fill="#005800"/>
<polyline points="138.8,450.0 146.4,473.9 153.3,452.0" stroke="#3a22b0" stroke-width="1" fill="none"/>
<line x1="153.3" y1="452" x2="158.9" y2="473.9" stroke="#4a8a20" stroke-width="1"/>
<line x1="146.4" y1="475.2" x2="165" y2="475.2" stroke="#3030c0" stroke-width="1"/>
<line x1="165" y1="475.2" x2="179" y2="475.2" stroke="#888" stroke-width="1"/>
<line x1="179" y1="475.2" x2="183" y2="493" stroke="#b04020" stroke-width="1"/>
<text x="131.5" y="425" font-family="Liberation Sans, sans-serif" font-size="10" fill="#2222dd">z</text>
<text x="172.5" y="428" font-family="Liberation Sans, sans-serif" font-size="10" fill="#d8c020">y</text>
<text x="252" y="499" font-family="Liberation Sans, sans-serif" font-size="10" fill="#e0a020">x</text>
<!-- view cube -->
<ellipse cx="831.8" cy="75" rx="25.3" ry="16.6" fill="none" stroke="#82868e" stroke-width="5"/>
<ellipse cx="831.8" cy="75" rx="22" ry="13.6" fill="none" stroke="#2e2e2e" stroke-width="1.2" opacity=".6"/>
<rect x="820.6" y="47.5" width="22.6" height="31" rx="1" fill="#808080"/>
<rect x="820.6" y="47.5" width="22.6" height="9.5" rx="1" fill="#888888"/>
<rect x="824.4" y="59.4" width="14.8" height="5" fill="#8a8a8a"/>
<text x="831.9" y="56" font-family="Liberation Sans, sans-serif" font-size="4.2" fill="#606060" text-anchor="middle" font-weight="bold">TOP</text>
<text x="831.9" y="71.8" font-family="Liberation Sans, sans-serif" font-size="3.9" fill="#606060" text-anchor="middle" font-weight="bold" textLength="16.5" lengthAdjust="spacingAndGlyphs">FRONT</text>
<text x="805.6" y="75.6" font-family="Liberation Sans, sans-serif" font-size="8" fill="#b2b2b2" text-anchor="middle" font-weight="bold" font-style="italic">W</text>
<text x="858.8" y="75.6" font-family="Liberation Sans, sans-serif" font-size="8" fill="#b2b2b2" text-anchor="middle" font-weight="bold">E</text>
<text x="831.8" y="98" font-family="Liberation Sans, sans-serif" font-size="9" fill="#b8b8b8" text-anchor="middle" font-weight="bold">S</text>
<!-- yellow splitter lines -->
<rect x="862.8" y="20" width="1.4" height="670" fill="#a08e42"/>
<rect x="875" y="20" width="2" height="670" fill="#7e6626"/>
<polygon points="864.2,55.4 871.7,51.8 871.7,59.2" fill="none" stroke="#b89a3c" stroke-width="1.1"/>
<rect x="864" y="91.3" width="3.5" height="1.1" fill="#b89a3c"/>
<rect x="864" y="678" width="3.5" height="1.1" fill="#b89a3c"/>
</g>
</svg>
<div class="t" style="letter-spacing:2.531px;left:21.4px;top:25.6px;color:#a8a8a8">[+]</div>
<div class="t" style="letter-spacing:0.508px;left:43.5px;top:25.6px;color:#a8a8a8">[Perspective ]</div>
<div class="t" style="letter-spacing:0.306px;left:115.9px;top:25.6px;color:#a8a8a8">[User Defined ]</div>
<div class="t" style="letter-spacing:0.417px;left:192.5px;top:25.6px;color:#a8a8a8">[Edged Faces ]</div>
<div class="t y" style="letter-spacing:-0.150px;left:70.5px;top:48px">Total</div>
<div class="t y" style="letter-spacing:-0.224px;left:140px;top:48px">x0_WING_LEFT</div>
<div class="t y" style="letter-spacing:-0.277px;left:30px;top:64.2px">Tris:</div>
<div class="t y" style="letter-spacing:0.133px;left:70.5px;top:64.2px">594 491</div>
<div class="t y" style="letter-spacing:0.141px;left:140.5px;top:64.2px">14 986</div>
<div class="t y" style="letter-spacing:-0.188px;left:30px;top:79.8px">Verts:</div>
<div class="t y" style="letter-spacing:0.133px;left:70.5px;top:79.8px">366 978</div>
<div class="t y" style="letter-spacing:0.194px;left:140px;top:79.8px">8 120</div>

<!-- ================= COMMAND PANEL ================= -->
<div id="panel" class="abs">
  <div class="abs" style="left:6px;top:1px;width:219px;height:0;border-top:1px dotted #8e8e8e"></div>
  <div class="tab" style="left:5px;width:30px"></div>
  <div class="tab" style="left:37px;width:30px;background:#464646"></div>
  <div class="tab" style="left:68.5px;width:30.5px"></div>
  <div class="tab" style="left:100.5px;width:30.5px"></div>
  <div class="tab" style="left:132.5px;width:30.5px"></div>
  <div class="tab" style="left:164.5px;width:30.5px"></div>
  <svg class="abs" style="left:0;top:0" width="225" height="60" viewBox="877 20 225 60">
    <!-- create (+) -->
    <rect x="889" y="40" width="15.2" height="3" fill="#9a9a9a"/><rect x="895" y="34" width="3" height="15.2" fill="#9a9a9a"/>
    <!-- modify -->
    <rect x="921.5" y="33.5" width="14.2" height="14.4" fill="none" stroke="#3fc4c4" stroke-width="1.4"/>
    <g fill="#444" stroke="#3fc4c4" stroke-width="0.9"><rect x="920.2" y="32.2" width="2.8" height="2.8"/><rect x="934.2" y="32.2" width="2.8" height="2.8"/><rect x="920.2" y="46.4" width="2.8" height="2.8"/><rect x="934.2" y="46.4" width="2.8" height="2.8"/></g>
    <path d="M923.9,45 Q925.5,37.6 933.6,36" fill="none" stroke="#dcdcdc" stroke-width="1.7" stroke-linecap="round"/>
    <!-- hierarchy -->
    <rect x="954.7" y="33" width="12.1" height="5.5" fill="#9a9a9a"/>
    <path d="M960.7,38.5 V42 M955.2,46.5 V42 H966.4 V46.5" fill="none" stroke="#379a9a" stroke-width="1"/>
    <rect x="953.1" y="46.1" width="4.2" height="4.2" fill="#379a9a"/><rect x="964.3" y="46.1" width="4.2" height="4.2" fill="#379a9a"/>
    <!-- motion -->
    <circle cx="989" cy="41.3" r="6.4" fill="none" stroke="#2f8c8c" stroke-width="0.9"/>
    <circle cx="991" cy="41.3" r="6.4" fill="#3a3a3a" stroke="#2f8c8c" stroke-width="0.9"/>
    <circle cx="994.9" cy="41.3" r="6.9" fill="#9a9a9a"/>
    <!-- display -->
    <rect x="1017.1" y="34.5" width="15" height="8.8" fill="#9a9a9a"/>
    <rect x="1023.3" y="45.8" width="3" height="1.6" fill="#9a9a9a"/><rect x="1020.2" y="47.2" width="8.8" height="1.5" fill="#9a9a9a"/>
    <!-- utilities (wrench) -->
    <path d="M1053.6,38.2 L1062.6,47.5" stroke="#9a9a9a" stroke-width="2.8" stroke-linecap="round" fill="none"/>
    <circle cx="1052.4" cy="36.8" r="3.5" fill="#9a9a9a"/>
    <path d="M1052.2,36.4 L1047.2,34.6" stroke="#3a3a3a" stroke-width="2.5" fill="none"/>
    <circle cx="1062.6" cy="47.5" r="0.6" fill="#3a3a3a"/>
  </svg>
  <div class="fld" style="top:42.4px"></div>
  <div class="t" style="letter-spacing:-0.397px;left:13px;top:44.4px">x0_WING_LEFT</div>
  <div class="fld" style="top:70px"></div>
  <div class="t" style="letter-spacing:0.084px;left:11.5px;top:72.9px">Modifier List</div>
  <!-- modifier stack -->
  <div class="abs" style="left:8px;top:91.8px;width:230px;height:115px;border:1px solid #d8d8d8;box-sizing:border-box;background:#444"></div>
  <div class="abs" style="left:9px;top:108.9px;width:220px;height:1px;background:#6a6a6a"></div>
  <div class="abs" style="left:9px;top:126px;width:220px;height:1px;background:#6a6a6a"></div>
  <div class="abs" style="left:47.5px;top:93.7px;width:190px;height:15.3px;border:1px solid #5a7fc0;box-sizing:border-box"></div>
  <svg class="abs" style="left:0;top:90px" width="80" height="40" viewBox="877 110 80 40">
    <path d="M890.6,120.5 Q897.7,111.6 904.8,120.5 Q897.7,129.4 890.6,120.5 Z" fill="#e2e2e2"/>
    <circle cx="897.9" cy="120.3" r="2.5" fill="#444"/><circle cx="898.8" cy="119.5" r="0.7" fill="#ddd"/>
    <polygon points="912.7,117.4 912.7,124.6 917.9,121" fill="#e0e0e0"/>
    <polygon points="893.8,134.5 893.8,141.5 898.6,138" fill="#e0e0e0"/>
  </svg>
  <div class="t" style="letter-spacing:-0.188px;left:50px;top:95px">Skin</div>
  <div class="t" style="letter-spacing:-0.052px;left:30.4px;top:112px">Editable Poly</div>
  <!-- stack toolbar -->
  <div class="abs" style="left:42.4px;top:212px;width:22.4px;height:22.5px;background:#5b87c5;border-radius:3px"></div>
  <div class="sep" style="left:36.6px"></div><div class="sep" style="left:70.1px"></div><div class="sep" style="left:127.9px"></div>
  <svg class="abs" style="left:0;top:206px" width="225" height="40" viewBox="877 226 225 40">
    <!-- pin -->
    <path d="M890.5,249.7 L896.4,244" stroke="#bdbdbd" stroke-width="1.2" fill="none"/>
    <polygon points="894.3,240.9 897.0,239.6 900.9,235.9 904.4,239.4 900.6,243.2 899.6,246.2" fill="#dadada"/>
    <!-- tube -->
    <rect x="927.3" y="234.8" width="8" height="1.8" fill="#d8d8d8"/><rect x="928.4" y="236" width="5.8" height="16.4" fill="#d8d8d8"/><rect x="927.9" y="251.6" width="6.8" height="1.3" fill="#d8d8d8"/>
    <rect x="929.7" y="236.8" width="3.2" height="14.6" fill="#5a5a5a"/><rect x="930.4" y="237.4" width="1.8" height="13.4" fill="#3fd0d0"/>
    <!-- make unique (disabled) -->
    <circle cx="959.3" cy="239.1" r="4.1" fill="#666" stroke="#383838" stroke-width="0.8"/>
    <circle cx="966" cy="247.6" r="4.2" fill="none" stroke="#2e2e2e" stroke-width="1.2"/><circle cx="970.2" cy="247.6" r="4.2" fill="none" stroke="#2e2e2e" stroke-width="1.2"/>
    <path d="M963.5,238.6 H970.4 V242" fill="none" stroke="#2e2e2e" stroke-width="1.1"/><polygon points="968,241.6 972.8,241.6 970.4,244.6" fill="#2e2e2e"/>
    <!-- trash -->
    <rect x="982.4" y="236.2" width="12.2" height="1.6" fill="#d0d0d0"/><rect x="986" y="234.6" width="5" height="1.6" fill="#d0d0d0"/>
    <rect x="983.4" y="238.6" width="10.2" height="13.8" rx="0.8" fill="#d0d0d0"/>
    <rect x="985.2" y="240.4" width="1.3" height="10" fill="#444"/><rect x="987.9" y="240.4" width="1.3" height="10" fill="#444"/><rect x="990.6" y="240.4" width="1.3" height="10" fill="#444"/>
    <!-- configure sets -->
    <rect x="1013" y="235.3" width="13" height="17.2" fill="#d0d0d0"/>
    <g fill="#4a4a4a"><rect x="1014.6" y="240.2" width="4.2" height="4.2"/><rect x="1020.4" y="240.2" width="4.2" height="4.2"/><rect x="1014.6" y="246.2" width="4.2" height="4.2"/><rect x="1020.4" y="246.2" width="4.2" height="4.2"/></g>
    <g fill="#d0d0d0"><rect x="1015.6" y="241.2" width="2.2" height="2.2"/><rect x="1021.4" y="241.2" width="2.2" height="2.2"/><rect x="1015.6" y="247.2" width="2.2" height="2.2"/><rect x="1021.4" y="247.2" width="2.2" height="2.2"/></g>
    <path d="M1021.6,244 L1029.6,236" stroke="#f0a020" stroke-width="2.4" stroke-linecap="round"/><polygon points="1020.2,245.6 1021,242.8 1023,244.8" fill="#333"/>
  </svg>
  <!-- divider -->
  <div class="abs" style="left:13.4px;top:250px;width:212px;height:1px;background:#5a5a5a"></div>
  <div class="abs" style="left:130px;top:248px;width:18px;height:5px;background:#444"></div>
  <div class="abs" style="left:134px;top:249.5px;width:11px;height:0;border-top:1px dotted #bbb"></div>
  <div class="abs" style="left:134px;top:251px;width:11px;height:0;border-top:1px dotted #888"></div>
  <!-- rollout -->
  <div class="abs" style="left:8px;top:256.8px;width:230px;height:420px;background:#525252;border-radius:4px 0 0 0"></div>
  <svg class="abs" style="left:12px;top:262px" width="12" height="10"><polygon points="1.8,1.8 8.2,1.8 5,6.6" fill="#b4b4b4"/></svg>
  <div class="t" style="letter-spacing:0.076px;left:26.7px;top:259.3px;font-weight:bold;font-size:11px;color:#f0f0f0">Parameters</div>
  <div class="btn" style="left:61.7px;top:281.3px;width:147.3px;height:20.6px;background:#5b87c5;line-height:23px;color:#d6deec"><span style="letter-spacing:-0.073px">Edit Envelopes</span></div>
  <!-- select group -->
  <div class="grp" style="left:55px;top:311.7px;width:167px;height:147.3px"></div>
  <div class="t" style="letter-spacing:-0.049px;left:59.3px;top:306.5px;background:#525252;padding:0 2px">Select</div>
  <div class="cb" style="left:63px;top:325.4px"><svg width="10" height="10" style="display:block"><path d="M2,5 L4.1,7.3 L8.1,2.7" fill="none" stroke="#f4f4f4" stroke-width="1.7"/></svg></div>
  <div class="t" style="letter-spacing:0.178px;left:76px;top:324px">Vertices</div>
  <div class="dbtn" style="left:63px;top:341.3px;width:72.3px;height:17.6px;line-height:19px"><span style="letter-spacing:0.107px">Shrink</span></div>
  <div class="dbtn" style="left:138.4px;top:341.3px;width:72px;height:17.6px;line-height:19px"><span style="letter-spacing:0.023px">Grow</span></div>
  <div class="dbtn" style="left:63px;top:364.2px;width:72.3px;height:17.6px;line-height:19px"><span style="letter-spacing:-0.145px">Ring</span></div>
  <div class="dbtn" style="left:138.4px;top:364.2px;width:72px;height:17.6px;line-height:19px"><span style="letter-spacing:-0.188px">Loop</span></div>
  <div class="cb" style="left:77.6px;top:390.8px"><svg width="10" height="10" style="display:block"><path d="M2,5 L4.1,7.3 L8.1,2.7" fill="none" stroke="#f4f4f4" stroke-width="1.7"/></svg></div>
  <div class="t" style="letter-spacing:0.031px;left:90.5px;top:389.8px">Select Element</div>
  <div class="cb" style="left:77.6px;top:408.8px;background:#6a6a6a"></div>
  <div class="t" style="letter-spacing:0.023px;left:90.5px;top:407.8px">Backface Cull Vertices</div>
  <div class="cb" style="left:63px;top:426.3px"><svg width="10" height="10" style="display:block"><path d="M2,5 L4.1,7.3 L8.1,2.7" fill="none" stroke="#f4f4f4" stroke-width="1.7"/></svg></div>
  <div class="t" style="letter-spacing:-0.078px;left:76px;top:424.8px">Envelopes</div>
  <div class="cb" style="left:63px;top:442.2px"><svg width="10" height="10" style="display:block"><path d="M2,5 L4.1,7.3 L8.1,2.7" fill="none" stroke="#f4f4f4" stroke-width="1.7"/></svg></div>
  <div class="t" style="letter-spacing:0.018px;left:76px;top:440.7px">Cross Sections</div>
  <!-- DQ group -->
  <div class="grp" style="left:53px;top:465.2px;width:169px;height:61.2px"></div>
  <div class="t" style="letter-spacing:0.011px;left:57.4px;top:460.3px;background:#525252;padding:0 2px">Dual Quaternion</div>
  <div class="cb" style="left:63px;top:480.7px"><svg width="10" height="10" style="display:block"><path d="M2,5 L4.1,7.3 L8.1,2.7" fill="none" stroke="#f4f4f4" stroke-width="1.7"/></svg></div>
  <div class="t" style="letter-spacing:0.044px;left:76px;top:479.2px">DQ Skinning Toggle</div>
  <div class="btn" style="left:61.7px;top:499px;width:136.3px;height:20.4px;line-height:22.5px"><span style="letter-spacing:0.085px">Blend Weights</span></div>
  <!-- bones -->
  <div class="t" style="letter-spacing:-0.123px;left:54.7px;top:535.1px">Bones:</div>
  <div class="btn" style="left:97px;top:532.5px;width:57.3px;height:17.5px;line-height:17px"><span style="letter-spacing:-0.099px">Add</span></div>
  <div class="btn" style="left:161px;top:532.5px;width:57.3px;height:17.5px;line-height:17px"><span style="letter-spacing:-0.175px">Remove</span></div>
  <div class="t" style="letter-spacing:0.176px;left:127.4px;top:561px">Sort Direction:</div>
  <div class="btn" style="left:199.6px;top:558px;width:17.4px;height:17.5px"></div>
  <svg class="abs" style="left:199.6px;top:558px" width="18" height="18"><polygon points="3.2,12.6 14.2,12.6 8.7,5.4" fill="#e8e8e8"/></svg>
  <div class="abs" style="left:52px;top:578.5px;width:164.8px;height:100px;border:1px solid #dcdcdc;box-sizing:border-box;background:#444"></div>
  <div class="abs" style="left:53px;top:631.1px;width:162.8px;height:12.6px;background:#0078d7"></div>
  <div class="t" style="letter-spacing:-0.156px;left:54.7px;top:580.2px;color:#fff">WING_Bone_1_Left</div>
  <div class="t" style="letter-spacing:-0.156px;left:54.7px;top:592.8px;color:#fff">WING_Bone_2_Left</div>
  <div class="t" style="letter-spacing:-0.156px;left:54.7px;top:605.5px;color:#fff">WING_Bone_3_Left</div>
  <div class="t" style="letter-spacing:-0.207px;left:54.7px;top:618.2px;color:#fff">WING_Bone_End_Left</div>
  <div class="t" style="letter-spacing:-0.078px;left:54.7px;top:630.9px;color:#fff">WING_Bone_Start_Left</div>
</div>
</body></html>
